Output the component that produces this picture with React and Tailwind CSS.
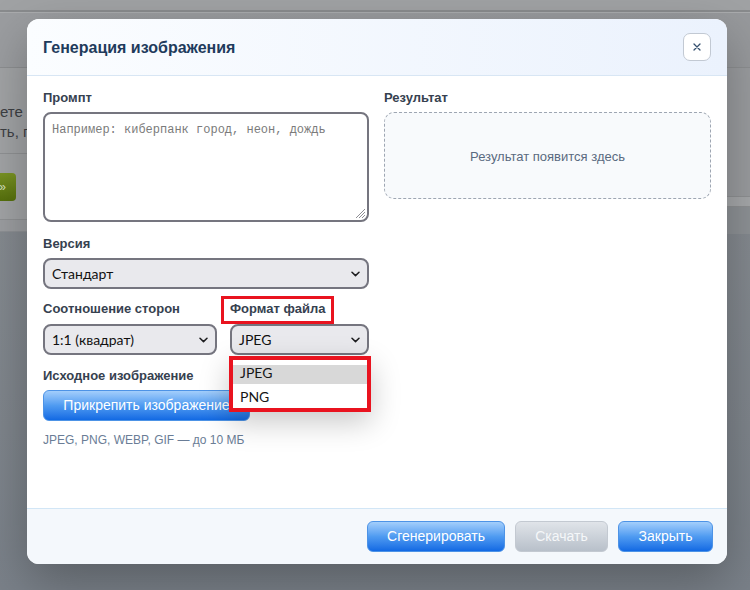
import React from "react";

function Chevron() {
  return (
    <svg width="9" height="6" viewBox="0 0 9 6" className="shrink-0">
      <path d="M1 1.2 L4.5 4.6 L8 1.2" fill="none" stroke="#1d1d1f" strokeWidth="1.5" strokeLinecap="round" strokeLinejoin="round" />
    </svg>
  );
}

function Select({ value, className = "" }) {
  return (
    <div className={`h-[31px] rounded-[8px] border-2 border-[#75757f] bg-[#e9e9ed] flex items-center justify-between pl-[7px] pr-[7px] ${className}`}>
      <span className="text-[14px] text-[#111] font-['Lato',sans-serif]">{value}</span>
      <Chevron />
    </div>
  );
}

function Label({ children, className = "" }) {
  return (
    <div className={`text-[13px] leading-[16px] font-bold text-[#36414f] ${className}`}>{children}</div>
  );
}

function BlueButton({ children, className = "" }) {
  return (
    <button className={`h-[31px] rounded-[6px] border border-[#4d93e6] bg-gradient-to-b from-[#a3cefb] via-[#4f9bf1] to-[#1169e3] text-white text-[14px] ${className}`}>
      {children}
    </button>
  );
}

function Backdrop() {
  return (
    <div className="flex flex-col h-full bg-gradient-to-b from-[#8c9094] to-[#7a8189]">
      <div className="h-[10px] bg-[#a0a2a4]" />
      <div className="h-[2px] bg-[#898b8d]" />
      <div className="h-[1px] bg-[#aaacae]" />
      <div className="h-[55px] bg-gradient-to-r from-[#9b9da0] to-[#97999c] border-b border-[#8d8f91]" />
      <div className="flex">
        {/* left page column */}
        <div className="w-[380px] flex flex-col">
          <div className="h-[86px] bg-[#a2a4a6] flex flex-col justify-center gap-[3px] pt-[22px] border-b border-[#909294] text-[15px] leading-[17px] text-[#3d4044]">
            <span className="whitespace-nowrap">ете с</span>
            <span className="whitespace-nowrap">ть, п</span>
          </div>
          <div className="h-[66px] bg-[#a2a4a6] flex items-center border-b border-[#909294]">
            <div className="h-[28px] w-[48px] -ml-[32px] rounded-[4px] bg-gradient-to-b from-[#7a9424] to-[#56700c] flex items-center justify-end pr-[10px] text-[#d9e2c2] text-[12px]">
              »
            </div>
          </div>
          <div className="h-[12px] bg-[#9c9ea1] border-b border-[#8e9195]" />
        </div>
        {/* right page column */}
        <div className="flex-1 flex flex-col">
          <div className="h-[128px] bg-[#9a9c9f]" />
          <div className="h-[11px] bg-[#a6a8aa] border-y border-[#8f9193]" />
          <div className="h-[27px] bg-[#8e9296]" />
        </div>
      </div>
    </div>
  );
}

function ResizeGrip() {
  return (
    <svg width="12" height="12" viewBox="0 0 12 12" className="absolute right-[1px] bottom-[1px]">
      <path d="M11 2 L2 11 M11 5 L5 11 M11 8 L8 11" stroke="#8f8f95" strokeWidth="1" />
    </svg>
  );
}

function FormatMenu() {
  return (
    <div className="absolute left-[-1px] top-[calc(100%+1px)] w-[142px] z-10 border-[4px] border-[#e9131f] bg-white shadow-[0_10px_30px_rgba(0,0,0,0.22)] pt-[5px] font-['Lato',sans-serif] text-[14px] text-[#161616]">
      <div className="h-[19px] bg-[#d8d8d8] flex items-center pl-[7px] pb-[4px]">JPEG</div>
      <div className="h-[24px] flex items-center pl-[7px] pt-[1px]">PNG</div>
    </div>
  );
}

function Modal() {
  return (
    <div className="absolute left-[27px] top-[19px] w-[700px] h-[545px] rounded-[12px] bg-white flex flex-col overflow-hidden shadow-[0_18px_50px_rgba(0,0,0,0.28)]">
      <header className="h-[57px] shrink-0 flex items-center justify-between px-4 border-b border-[#d8e6f4] bg-gradient-to-r from-[#fbfdff] to-[#ebf2fd]">
        <h2 className="text-[16px] font-bold text-[#1f3b5c] pt-[1px]">Генерация изображения</h2>
        <button className="w-[28px] h-[28px] rounded-[7px] border border-[#c2c9d3] bg-white flex items-center justify-center">
          <svg width="8" height="8" viewBox="0 0 8 8">
            <path d="M1 1 L7 7 M7 1 L1 7" stroke="#35506f" strokeWidth="1.3" strokeLinecap="round" />
          </svg>
        </button>
      </header>

      <div className="flex-1 px-4 pt-[14px] grid grid-cols-[326px_327px] gap-x-[15px] items-start">
        {/* form column */}
        <div className="flex flex-col">
          <Label className="mb-[6px]">Промпт</Label>
          <div className="relative h-[110px] rounded-[8px] border-2 border-[#75757f] bg-white px-[7px] pt-[2px]">
            <span className="font-['Liberation_Mono',monospace] text-[12px] text-[#7b7b7b]">Например: киберпанк город, неон, дождь</span>
            <ResizeGrip />
          </div>

          <Label className="mt-[14px] mb-[6px]">Версия</Label>
          <Select value="Стандарт" />

          <div className="mt-[12px] flex gap-[13px]">
            <div className="w-[174px] flex flex-col">
              <Label className="mb-[7px]">Соотношение сторон</Label>
              <Select value="1:1 (квадрат)" />
            </div>
            <div className="flex-1 flex flex-col">
              <div className="relative mb-[7px]">
                <Label className="text-[#2f4f78]">Формат файла</Label>
                <span className="absolute left-[-9px] top-[-5px] w-[113px] h-[28px] border-[3px] border-[#e9131f]" />
              </div>
              <div className="relative">
                <Select value="JPEG" />
                <FormatMenu />
              </div>
            </div>
          </div>

          <Label className="mt-[13px] mb-[6px]">Исходное изображение</Label>
          <BlueButton className="w-[207px]">Прикрепить изображение</BlueButton>
          <p className="mt-[12px] text-[12px] leading-[15px] text-[#6a7d96]">JPEG, PNG, WEBP, GIF — до 10 МБ</p>
        </div>

        {/* result column */}
        <div className="flex flex-col">
          <Label className="mb-[6px]">Результат</Label>
          <div className="h-[87px] rounded-[10px] border border-dashed border-[#9ea6b2] bg-[#f8fafc] flex items-center justify-center pt-[2px] text-[13px] text-[#5a6a80]">
            Результат появится здесь
          </div>
        </div>
      </div>

      <footer className="h-[56px] shrink-0 border-t border-[#d2e6f6] bg-[#f4f8fc] flex items-center justify-end gap-[10px] pr-[14px]">
        <BlueButton className="w-[138px]">Сгенерировать</BlueButton>
        <button className="w-[93px] h-[31px] rounded-[6px] border border-[#c3c9d1] bg-gradient-to-b from-[#e0e4e9] to-[#b8c0ca] text-[#f5f7f9] text-[14px]">
          Скачать
        </button>
        <BlueButton className="w-[95px]">Закрыть</BlueButton>
      </footer>
    </div>
  );
}

export default function App() {
  return (
    <div className="relative w-[750px] h-[590px] overflow-hidden font-['Liberation_Sans',Arial,sans-serif]">
      <Backdrop />
      <Modal />
    </div>
  );
}
